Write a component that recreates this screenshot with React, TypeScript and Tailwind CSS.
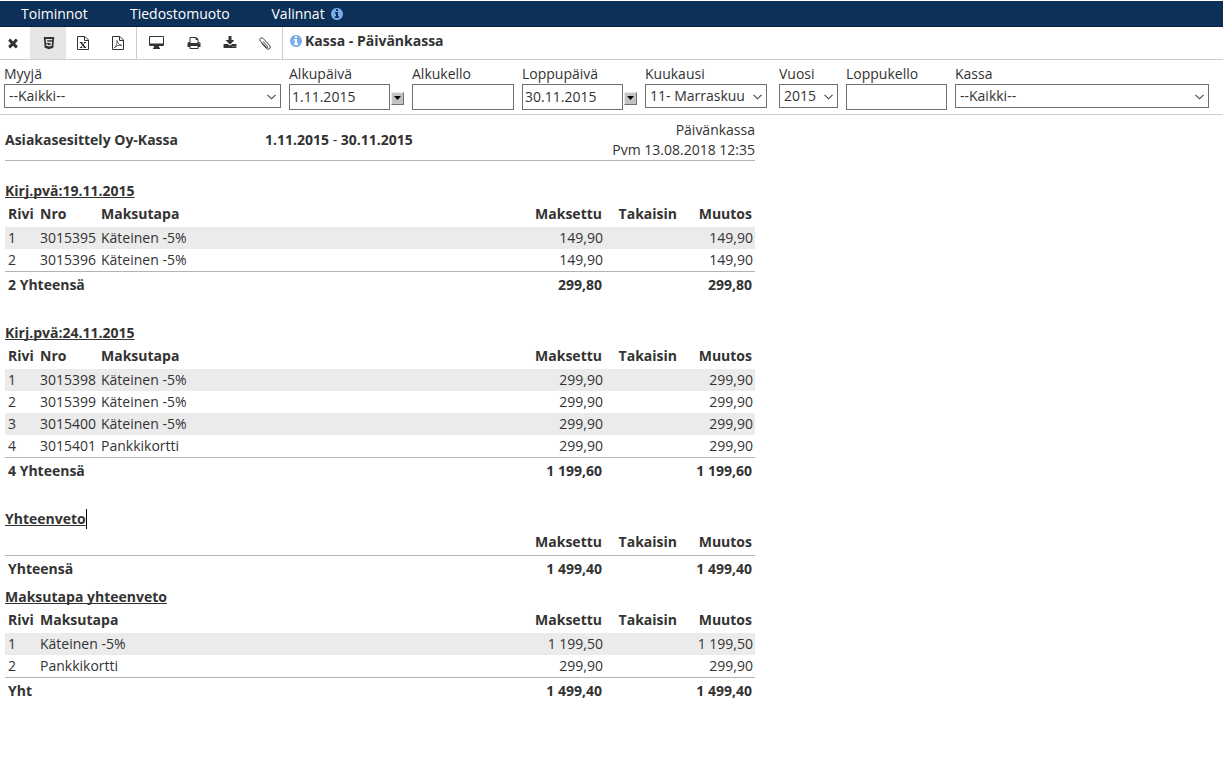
import React from "react";
import { FaHtml5 } from "react-icons/fa";

const paths = {
  times:
    "M1490 1322q0 40-28 68l-136 136q-28 28-68 28t-68-28l-294-294-294 294q-28 28-68 28t-68-28l-136-136q-28-28-28-68t28-68l294-294-294-294q-28-28-28-68t28-68l136-136q28-28 68-28t68 28l294 294 294-294q28-28 68-28t68 28l136 136q28 28 28 68t-28 68l-294 294 294 294q28 28 28 68z",
  info: "M1152 1376v-160q0-14-9-23t-23-9h-96v-512q0-14-9-23t-23-9h-320q-14 0-23 9t-9 23v160q0 14 9 23t23 9h96v320h-96q-14 0-23 9t-9 23v160q0 14 9 23t23 9h448q14 0 23-9t9-23zm-128-896v-160q0-14-9-23t-23-9h-192q-14 0-23 9t-9 23v160q0 14 9 23t23 9h192q14 0 23-9t9-23zm640 416q0 209-103 385.5t-279.5 279.5-385.5 103-385.5-103-279.5-279.5-103-385.5 103-385.5 279.5-279.5 385.5-103 385.5 103 279.5 279.5 103 385.5z",
  download:
    "M1344 1344q0-26-19-45t-45-19-45 19-19 45 19 45 45 19 45-19 19-45zm256 0q0-26-19-45t-45-19-45 19-19 45 19 45 45 19 45-19 19-45zm128-224v320q0 40-28 68t-68 28h-1472q-40 0-68-28t-28-68v-320q0-40 28-68t68-28h465l135 136q58 56 136 56t136-56l136-136h464q40 0 68 28t28 68zm-325-569q17 41-14 70l-448 448q-18 19-45 19t-45-19l-448-448q-31-29-14-70 17-39 59-39h256v-448q0-26 19-45t45-19h256q26 0 45 19t19 45v448h256q42 0 59 39z",
  print:
    "M448 1536h896v-256h-896v256zm0-640h896v-384h-160q-40 0-68-28t-28-68v-160h-640v640zm1152 64q0-26-19-45t-45-19-45 19-19 45 19 45 45 19 45-19 19-45zm128 0v416q0 13-9.5 22.5t-22.5 9.5h-224v160q0 40-28 68t-68 28h-960q-40 0-68-28t-28-68v-160h-224q-13 0-22.5-9.5t-9.5-22.5v-416q0-79 56.5-135.5t135.5-56.5h64v-544q0-40 28-68t68-28h672q40 0 88 20t76 48l152 152q28 28 48 76t20 88v256h64q79 0 135.5 56.5t56.5 135.5z",
};

function Glyph({ d, className }: { d: string; className: string }) {
  return (
    <svg viewBox="0 0 1792 1792" fill="currentColor" className={className}>
      <path d={d} />
    </svg>
  );
}

function FileIcon({ children }: { children: React.ReactNode }) {
  return (
    <svg viewBox="0 0 12 14" fill="none" stroke="currentColor" className="h-[14px] w-[12px]">
      <path d="M.5 .5H8L11.5 4V13.5H.5ZM7.5 .5V4.5H11.5" />
      {children}
    </svg>
  );
}

function Tool({ children, className }: { children: React.ReactNode; className: string }) {
  return <div className={"flex h-full shrink-0 items-center justify-center " + className}>{children}</div>;
}

function Field({ label, className, children }: { label: string; className: string; children: React.ReactNode }) {
  return (
    <div className={"shrink-0 " + className}>
      <div className="h-[20px] whitespace-nowrap leading-[20px]">{label}</div>
      {children}
    </div>
  );
}

function Select({ value }: { value: string }) {
  return (
    <div className="flex h-[24px] items-center justify-between border border-[#707070] pl-1 pr-[4px]">
      <span className="whitespace-nowrap leading-[22px]">{value}</span>
      <svg viewBox="0 0 9 6" className="mt-[2px] h-[6px] w-[9px]" fill="none" stroke="#444" strokeWidth="1.1">
        <path d="M.5 .8L4.5 4.8L8.5 .8" />
      </svg>
    </div>
  );
}

function Input({ value = "" }: { value?: string }) {
  return <div className="h-[26px] w-full border border-[#707070] pl-[2px] leading-[24px]">{value}</div>;
}

function DateInput({ value }: { value: string }) {
  return (
    <div className="flex items-end">
      <div className="w-[101px]">
        <Input value={value} />
      </div>
      <div className="mb-[5px] ml-px flex h-[13px] w-[13px] items-center justify-center border border-t-[#e8e8e8] border-r-[#707070] border-b-[#707070] border-l-[#e8e8e8] bg-[#c3c3c3]">
        <svg viewBox="0 0 7 4" className="mb-px mr-px h-[4px] w-[7px]">
          <path d="M0 0H7L3.5 4Z" fill="#000" />
        </svg>
      </div>
    </div>
  );
}

function Heading({ children }: { children: React.ReactNode }) {
  return (
    <div className="h-[22px] font-bold leading-[22px]">
      <span className="underline decoration-1 underline-offset-1 [text-decoration-skip-ink:none]">{children}</span>
    </div>
  );
}

type Row = { cells: string[]; paid: string; change: string };

function Columns({ cells, wide, bold, paid, back, change }: { cells: string[]; wide?: boolean; bold?: boolean; paid: string; back: string; change: string }) {
  const end = bold ? "pr-[3px]" : "pr-[2px]";
  return (
    <div className={"flex h-full items-center whitespace-nowrap pb-[2px] pl-[3px] " + (bold ? "font-bold" : "")}>
      <div className={wide ? "w-[93px]" : "w-[32px]"}>{cells[0]}</div>
      {!wide && <div className="w-[61px]">{cells[1]}</div>}
      <div className="flex-1">{!wide && cells[2]}</div>
      <div className={"w-[100px] text-right " + end}>{paid}</div>
      <div className={"w-[75px] text-right " + end}>{back}</div>
      <div className={"w-[75px] text-right " + end}>{change}</div>
    </div>
  );
}

function Table({ head, rows, total, sum }: { head: string[]; rows: Row[]; total: string; sum: string }) {
  return (
    <div>
      <div className="h-[25px] pb-px">
        <Columns bold cells={head} paid="Maksettu" back="Takaisin" change="Muutos" />
      </div>
      {rows.map((r, i) => (
        <div key={i} className={"h-[22px] " + (i % 2 === 0 ? "bg-[#ebebeb]" : "")}>
          <Columns cells={r.cells} paid={r.paid} back="" change={r.change} />
        </div>
      ))}
      <div className="h-[27px] border-t border-[#b3b3b3]">
        <Columns bold wide cells={[total]} paid={sum} back="" change={sum} />
      </div>
    </div>
  );
}

const row = (cells: string[], amount: string): Row => ({ cells, paid: amount, change: amount });

export default function App() {
  return (
    <div className="h-[773px] w-[1223px] overflow-hidden bg-white font-['Open_Sans','Noto_Sans',sans-serif] text-[14px] text-[#333]">
      <nav className="mt-px flex h-[26px] items-center border-b border-[#08203f] bg-[#0d3058] pl-[21px] leading-[26px] text-white">
        <span className="w-[109px]">Toiminnot</span>
        <span className="w-[141.5px]">Tiedostomuoto</span>
        <span className="w-[58.5px]">Valinnat</span>
        <Glyph d={paths.info} className="h-[14px] w-[14px] text-[#78adea]" />
      </nav>

      <div className="flex h-[33px] items-center border-b border-[#ccc]">
        <Tool className="w-[30px] pr-[5px]">
          <Glyph d={paths.times} className="h-[14px] w-[14px]" />
        </Tool>
        <Tool className="w-[36px] bg-[#e6e6e6] pl-px">
          <FaHtml5 className="h-[14px] w-[14px]" />
        </Tool>
        <Tool className="w-[34px]">
          <FileIcon>
            <path d="M2.8 6.5H5.4M6.8 6.5H9.2M2.8 11.5H5.2M6.6 11.5H9.2" />
            <path d="M4 6.5L8 11.5" strokeWidth="1.5" />
            <path d="M8 6.5L4 11.5" strokeWidth=".9" />
          </FileIcon>
        </Tool>
        <Tool className="w-[37px] border-r border-[#ccc]">
          <FileIcon>
            <path d="M5 4.5C6 7 6.5 9 9.8 9.3C7 8.8 4 10 2.3 11.7C4 10.5 5.5 7 5 4.5" strokeWidth=".8" />
          </FileIcon>
        </Tool>
        <Tool className="w-[38px] pb-px">
          <svg viewBox="0 0 15 13" className="h-[13px] w-[15px]" fill="currentColor">
            <path fillRule="evenodd" d="M1 0H14Q15 0 15 1V9Q15 10 14 10H10V11L11 12.2V13H4V12.2L5 11V10H1Q0 10 0 9V1Q0 0 1 0ZM1 1V7.5H14V1Z" />
          </svg>
        </Tool>
        <Tool className="w-[36px] pl-px">
          <Glyph d={paths.print} className="h-[14px] w-[14px]" />
        </Tool>
        <Tool className="w-[36px] pl-px">
          <Glyph d={paths.download} className="h-[14px] w-[14px]" />
        </Tool>
        <Tool className="w-[36px] border-r border-[#ccc]">
          <svg viewBox="0 0 12 13" className="h-[13px] w-[12px]" fill="none" stroke="currentColor" strokeWidth=".95">
            <path d="M4 4.5L8.4 9.2Q9.2 10 8.6 10.5Q8 10.9 7.2 10.1L1.5 4.2Q.2 2.5 1.4 1.3Q2.7 .2 4.2 1.5L10.4 8.1Q12.1 10.1 10.8 11.6Q9.2 13 7.4 11.4L2.6 6.4" />
          </svg>
        </Tool>
        <div className="flex h-full items-center pb-[5px] pl-[6px] font-bold">
          <Glyph d={paths.info} className="mr-[2px] h-[14px] w-[14px] text-[#78adea]" />
          Kassa - Päivänkassa
        </div>
      </div>

      <div className="flex h-[55px] border-b border-[#ccc] pl-[4px] pt-[4px]">
        <Field label="Myyjä" className="w-[285px] pr-[8px]">
          <Select value="--Kaikki--" />
        </Field>
        <Field label="Alkupäivä" className="w-[123px]">
          <DateInput value="1.11.2015" />
        </Field>
        <Field label="Alkukello" className="w-[110px] pr-[8px]">
          <Input />
        </Field>
        <Field label="Loppupäivä" className="w-[123px]">
          <DateInput value="30.11.2015" />
        </Field>
        <Field label="Kuukausi" className="w-[134px] pr-[12px]">
          <Select value="11- Marraskuu" />
        </Field>
        <Field label="Vuosi" className="w-[67px] pr-[8px]">
          <Select value="2015" />
        </Field>
        <Field label="Loppukello" className="w-[109px] pr-[8px]">
          <Input />
        </Field>
        <Field label="Kassa" className="w-[254px]">
          <Select value="--Kaikki--" />
        </Field>
      </div>

      <main className="ml-[5px] w-[750px]">
        <div className="flex h-[46px] items-center border-b border-[#b3b3b3] pt-[5px] font-bold">
          <span className="w-[260px] pb-[2px]">Asiakasesittely Oy-Kassa</span>
          <span className="flex-1 pb-[2px]">
            1.11.2015<span className="font-normal"> - </span>30.11.2015
          </span>
          <span className="text-right font-normal leading-[20px]">
            Päivänkassa
            <br />
            Pvm 13.08.2018 12:35
          </span>
        </div>

        <div className="pt-[19px]">
          <Heading>Kirj.pvä:19.11.2015</Heading>
          <Table
            head={["Rivi", "Nro", "Maksutapa"]}
            rows={[row(["1", "3015395", "Käteinen -5%"], "149,90"), row(["2", "3015396", "Käteinen -5%"], "149,90")]}
            total="2 Yhteensä"
            sum="299,80"
          />
        </div>

        <div className="pt-[24px]">
          <Heading>Kirj.pvä:24.11.2015</Heading>
          <Table
            head={["Rivi", "Nro", "Maksutapa"]}
            rows={[
              row(["1", "3015398", "Käteinen -5%"], "299,90"),
              row(["2", "3015399", "Käteinen -5%"], "299,90"),
              row(["3", "3015400", "Käteinen -5%"], "299,90"),
              row(["4", "3015401", "Pankkikortti"], "299,90"),
            ]}
            total="4 Yhteensä"
            sum="1 199,60"
          />
        </div>

        <div className="pt-[24px]">
          <div className="flex items-center">
            <Heading>Yhteenveto</Heading>
            <div className="h-[20px] w-px bg-black" />
          </div>
          <Table head={["", "", ""]} rows={[]} total="Yhteensä" sum="1 499,40" />
        </div>

        <div className="pt-[4px]">
          <Heading>Maksutapa yhteenveto</Heading>
          <Table
            head={["Rivi", "Maksutapa", ""]}
            rows={[row(["1", "Käteinen -5%", ""], "1 199,50"), row(["2", "Pankkikortti", ""], "299,90")]}
            total="Yht"
            sum="1 499,40"
          />
        </div>
      </main>
    </div>
  );
}
